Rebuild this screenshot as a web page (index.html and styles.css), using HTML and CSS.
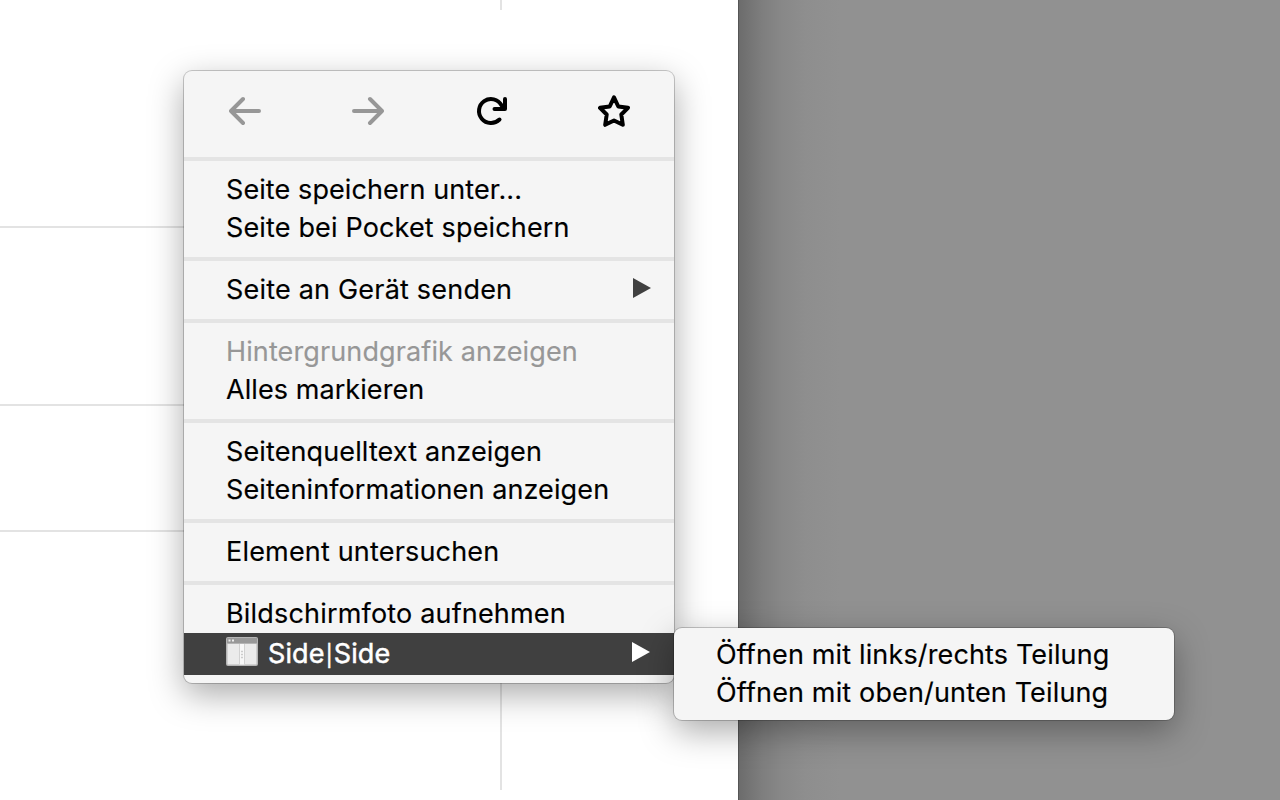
FILE: index.html
```
<!DOCTYPE html>
<html lang="de">
<head>
<meta charset="utf-8">
<title>Side|Side</title>
<link rel="stylesheet" href="styles.css">
</head>
<body>
<main class="desktop">
  <div class="window">
    <div class="vline vline-top"></div>
    <div class="vline vline-bottom"></div>
    <div class="rule rule-1"></div>
    <div class="rule rule-2"></div>
    <div class="rule rule-3"></div>
  </div>

  <nav class="menu main-menu">
    <div class="toolbar">
      <svg class="icon disabled" viewBox="0 0 32 32"><path d="M30 16H2M14 4 2 16l12 12"/></svg>
      <svg class="icon disabled" viewBox="0 0 32 32"><path d="M2 16h28M18 4l12 12-12 12"/></svg>
      <svg class="icon" viewBox="0 0 32 32"><path d="M24.500 24.500A12 12 0 1 1 26.500 10.200L28.500 13.500M30 4v10H19.500"/></svg>
      <svg class="icon" viewBox="0 0 32 32"><path d="M16 2.300 20.300 11.500 30 12.800 23.300 19.500 24.800 29.800 16 25.500 7.200 29.800 8.700 19.500 2 12.800 11.700 11.500z"/></svg>
    </div>
    <hr>
    <div class="item"><span class="t1">Seite speichern unter...</span></div>
    <div class="item"><span class="t2">Seite bei Pocket speichern</span></div>
    <hr>
    <div class="item"><span class="t3">Seite an Gerät senden</span><svg class="arrow" viewBox="0 0 18 20"><path d="M0 0 18 10 0 20z"/></svg></div>
    <hr>
    <div class="item muted"><span class="t4">Hintergrundgrafik anzeigen</span></div>
    <div class="item"><span class="t5">Alles markieren</span></div>
    <hr>
    <div class="item"><span class="t6">Seitenquelltext anzeigen</span></div>
    <div class="item"><span class="t7">Seiteninformationen anzeigen</span></div>
    <hr>
    <div class="item"><span class="t8">Element untersuchen</span></div>
    <hr>
    <div class="item"><span class="t9">Bildschirmfoto aufnehmen</span></div>
    <div class="item selected">
      <svg class="app-icon" viewBox="0 0 32 29">
        <rect class="frame" x="0" y="0" width="32" height="29" rx="2"/>
        <rect class="bar" x="1" y="1" width="30" height="5"/>
        <rect class="pane" x="1.500" y="7" width="29" height="20.500"/>
        <rect class="split" x="13.500" y="7" width="5" height="20.500"/>
        <path class="edge" d="M13.500 7v20.500M18.500 7v20.500"/>
        <path class="dots" d="M2.500 3.500h2M6 3.500h2"/>
        <path class="grip" d="M15 14.500h2M15 17.500h2M15 20.500h2"/>
      </svg>
      <span class="t10">Side<span class="pipe">|</span>Side</span>
      <svg class="arrow" viewBox="0 0 18 20"><path d="M0 0 18 10 0 20z"/></svg>
    </div>
  </nav>

  <nav class="menu submenu">
    <div class="item"><span class="t11">Öffnen mit links/rechts Teilung</span></div>
    <div class="item"><span class="t12">Öffnen mit oben/unten Teilung</span></div>
  </nav>
</main>
</body>
</html>
```
FILE: styles.css
```
* { box-sizing: border-box; }
body { margin: 0; font-family: Inter, "Liberation Sans", sans-serif; }
.desktop {
  position: relative;
  width: 1280px;
  height: 800px;
  overflow: hidden;
  background: linear-gradient(90deg, #6b6b6b 738px, #737373 748px, #7e7e7e 762px, #888 782px, #8e8e8e 805px, #919191 840px);
}
.window {
  position: relative;
  width: 739px;
  height: 800px;
  background: #fff;
  border-right: 1px solid #555;
}
.vline { position: absolute; left: 500px; width: 2px; background: #e3e3e3; }
.vline-top { top: 0; height: 10px; }
.vline-bottom { top: 532px; height: 258px; }
.rule { position: absolute; left: 0; width: 500px; height: 2px; background: #e3e3e3; }
.rule-1 { top: 226px; }
.rule-2 { top: 404px; }
.rule-3 { top: 530px; }

.menu {
  position: absolute;
  background: #f5f5f5;
  border-radius: 8px;
  box-shadow: 0 0 0 1px rgba(0, 0, 0, .2), 0 11px 34px rgba(0, 0, 0, .34);
}
.main-menu { left: 184px; top: 71px; width: 490px; padding-bottom: 8px; }
.submenu { left: 674px; top: 628px; width: 500px; padding: 8px 0; }
.toolbar {
  display: flex;
  justify-content: space-between;
  height: 76px;
  padding: 24px 44px 0 45px;
}
.icon {
  width: 32px;
  height: 32px;
  fill: none;
  stroke: #000;
  stroke-width: 4;
  stroke-linecap: round;
  stroke-linejoin: round;
}
.icon.disabled { stroke: #979797; }
hr { height: 4px; margin: 10px 0; border: 0; background: #e4e4e4; }
.item {
  display: flex;
  align-items: center;
  height: 38px;
  padding: 0 23px 0 42px;
  color: #000;
  font-size: 27px;
  line-height: 36px;
  white-space: nowrap;
  -webkit-text-stroke: .15px currentColor;
}
.muted { color: #979797; }
.arrow { width: 18px; height: 20px; margin: -4px 0 0 auto; fill: #404040; }
.selected {
  height: 42px;
  padding-right: 24px;
  background: #404040;
  color: #fff;
  -webkit-text-stroke-width: .5px;
}
.selected .arrow { fill: #fff; }
.app-icon { width: 32px; height: 29px; margin: -5px 10px 0 0; }
.frame { fill: #b5b5b5; }
.bar { fill: #999; }
.pane { fill: #ebebeb; }
.split { fill: #f8f8f8; }
.edge { stroke: #d2d2d2; }
.dots { stroke: #eee; stroke-width: 2; }
.grip { stroke: #ccc; stroke-width: 1.5; }
.pipe { margin: 0 1px; font-size: 21px; line-height: 1; }
.t1 { letter-spacing: .09px; }
.t2 { letter-spacing: .15px; }
.t3 { letter-spacing: .2px; }
.t4 { letter-spacing: .12px; }
.t5 { letter-spacing: .07px; }
.t6 { letter-spacing: .12px; }
.t7 { letter-spacing: .11px; }
.t8 { letter-spacing: .18px; }
.t9 { letter-spacing: .18px; }
.t10 { letter-spacing: .12px; }
.t11 { letter-spacing: .14px; }
.t12 { letter-spacing: .15px; }
```
